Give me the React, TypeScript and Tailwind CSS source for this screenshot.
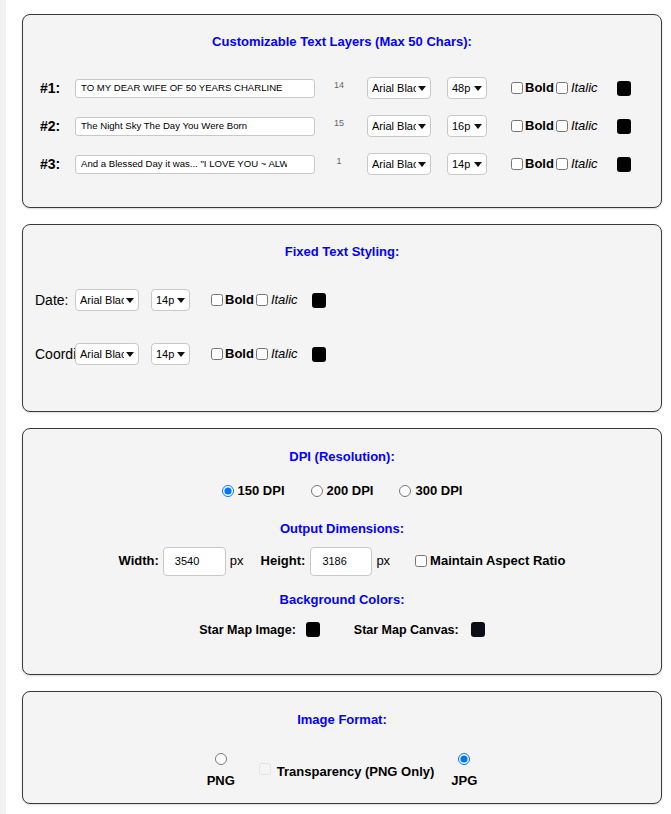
import React from 'react';

const FONT = "font-['Liberation_Sans',Arial,sans-serif]";

// fake dropdown to look like the small native selects
function Dropdown({ value, width }: { value: string; width: string }) {
  return (
    <div
      className={`flex items-center h-[22px] bg-white border border-[#c8c8c8] rounded-[4px] pl-[4px] pr-[4px] ${width}`}
    >
      <span className="flex-1 overflow-hidden whitespace-nowrap text-[11px] text-black leading-none">
        {value}
      </span>
      <svg width="8" height="5" viewBox="0 0 8 5" className="ml-[2px] shrink-0">
        <path d="M0 0h8L4 5z" fill="#111" />
      </svg>
    </div>
  );
}

function Swatch({ color = '#000' }: { color?: string }) {
  return <div className="w-[14px] h-[15px] rounded-[3px]" style={{ backgroundColor: color }} />;
}

function StyleToggles() {
  return (
    <div className="flex items-center">
      <input type="checkbox" className="w-[12px] h-[12px] m-0" />
      <span className="ml-[2px] text-[13px] font-bold text-black">Bold</span>
      <input type="checkbox" className="w-[12px] h-[12px] m-0 ml-[2px]" />
      <span className="ml-[3px] text-[13px] italic text-black">Italic</span>
    </div>
  );
}

function Panel({ children, className }: { children: React.ReactNode; className?: string }) {
  return (
    <section className={`bg-[#f4f4f4] border border-[#3a3a3a] rounded-[8px] shadow-[0_1px_2px_rgba(0,0,0,0.15)] ${className ?? ''}`}>
      {children}
    </section>
  );
}

function Title({ children }: { children: React.ReactNode }) {
  return <h2 className="text-center text-[13px] font-bold text-[#0000ff] leading-[16px]">{children}</h2>;
}

const layers = [
  { n: '#1:', text: 'TO MY DEAR WIFE OF 50 YEARS CHARLINE', count: '14', size: '48p' },
  { n: '#2:', text: 'The Night Sky The Day You Were Born', count: '15', size: '16p' },
  { n: '#3:', text: 'And a Blessed Day it was... "I LOVE YOU ~ ALWAYS"', count: '1', size: '14p' },
];

export default function App() {
  return (
    <div className={`flex min-h-[814px] bg-white ${FONT}`}>
      <div className="w-[6px] shrink-0 bg-[#f1f1f1]" />
      <main className="flex-1 pl-[16px] pr-[9px] pt-[14px] flex flex-col gap-[16px]">
        {/* Text layers */}
        <Panel className="h-[194px] pt-[19px]">
          <Title>Customizable Text Layers (Max 50 Chars):</Title>
          <div className="mt-[19px] flex flex-col">
            {layers.map((l) => (
              <div key={l.n} className="h-[38px] flex items-center pl-[17px]">
                <span className="w-[35px] text-[14px] font-bold text-black">{l.n}</span>
                <div className="w-[240px] h-[19px] bg-white border border-[#c8c8c8] rounded-[3px] pl-[5px] pr-[27px] flex items-center">
                  <span className="text-[9.6px] text-black whitespace-nowrap overflow-hidden">{l.text}</span>
                </div>
                <span className="w-[20px] ml-[14px] text-center text-[9px] text-[#666] -mt-[4px]">
                  {l.count}
                </span>
                <div className="ml-[18px]">
                  <Dropdown value="Arial Black" width="w-[64px]" />
                </div>
                <div className="ml-[16px]">
                  <Dropdown value={l.size} width="w-[40px]" />
                </div>
                <div className="ml-[24px]">
                  <StyleToggles />
                </div>
                <div className="ml-[19px]">
                  <Swatch />
                </div>
              </div>
            ))}
          </div>
        </Panel>

        {/* Fixed text */}
        <Panel className="h-[188px] pt-[19px]">
          <Title>Fixed Text Styling:</Title>
          <div className="mt-[21px] flex flex-col gap-[16px]">
            {['Date:', 'Coordinates:'].map((lbl) => (
              <div key={lbl} className="h-[38px] flex items-center pl-[12px]">
                <span className="w-[40px] overflow-hidden whitespace-nowrap text-[14px] text-black">{lbl}</span>
                <Dropdown value="Arial Black" width="w-[64px]" />
                <div className="ml-[12px]">
                  <Dropdown value="14p" width="w-[39px]" />
                </div>
                <div className="ml-[21px]">
                  <StyleToggles />
                </div>
                <div className="ml-[14px]">
                  <Swatch />
                </div>
              </div>
            ))}
          </div>
        </Panel>

        {/* Output */}
        <Panel className="h-[247px] pt-[20px]">
          <Title>DPI (Resolution):</Title>
          <div className="mt-[16px] flex justify-center items-center gap-[26px]">
            {['150 DPI', '200 DPI', '300 DPI'].map((d, i) => (
              <label key={d} className="flex items-center">
                <input type="radio" name="dpi" defaultChecked={i === 0} className="w-[12px] h-[12px] m-0" />
                <span className="ml-[4px] text-[13px] font-bold text-black">{d}</span>
              </label>
            ))}
          </div>
          <div className="mt-[20px]">
            <Title>Output Dimensions:</Title>
          </div>
          <div className="mt-[10px] flex justify-center items-center">
            <span className="text-[13px] font-bold text-black">Width:</span>
            <div className="ml-[4px] w-[63px] h-[29px] bg-white border border-[#c8c8c8] rounded-[4px] flex items-center pl-[11px] text-[11px] text-black">
              3540
            </div>
            <span className="ml-[4px] text-[13px] text-black">px</span>
            <span className="ml-[17px] text-[13px] font-bold text-black">Height:</span>
            <div className="ml-[5px] w-[62px] h-[29px] bg-white border border-[#c8c8c8] rounded-[4px] flex items-center pl-[11px] text-[11px] text-black">
              3186
            </div>
            <span className="ml-[4px] text-[13px] text-black">px</span>
            <input type="checkbox" className="ml-[25px] w-[12px] h-[12px] m-0" />
            <span className="ml-[3px] text-[13px] font-bold text-black">Maintain Aspect Ratio</span>
          </div>
          <div className="mt-[16px]">
            <Title>Background Colors:</Title>
          </div>
          <div className="mt-[13px] flex justify-center items-center">
            <span className="text-[12.5px] font-bold text-black">Star Map Image:</span>
            <div className="ml-[10px]">
              <Swatch />
            </div>
            <span className="ml-[34px] text-[12.5px] font-bold text-black">Star Map Canvas:</span>
            <div className="ml-[12px]">
              <Swatch color="#0b0d17" />
            </div>
          </div>
        </Panel>

        {/* Format */}
        <Panel className="h-[113px] pt-[20px]">
          <Title>Image Format:</Title>
          <div className="mt-[25px] flex justify-center items-center">
            <label className="flex flex-col items-center">
              <input type="radio" name="fmt" className="w-[12px] h-[12px] m-0" />
              <span className="mt-[6px] text-[13px] font-bold text-black">PNG</span>
            </label>
            <label className="ml-[24px] flex items-center">
              <input type="checkbox" disabled className="w-[12px] h-[12px] m-0 opacity-40 -mt-[6px]" />
              <span className="ml-[6px] text-[13px] font-bold text-black">Transparency (PNG Only)</span>
            </label>
            <label className="ml-[17px] flex flex-col items-center">
              <input type="radio" name="fmt" defaultChecked className="w-[12px] h-[12px] m-0" />
              <span className="mt-[6px] text-[13px] font-bold text-black">JPG</span>
            </label>
          </div>
        </Panel>
      </main>
    </div>
  );
}
